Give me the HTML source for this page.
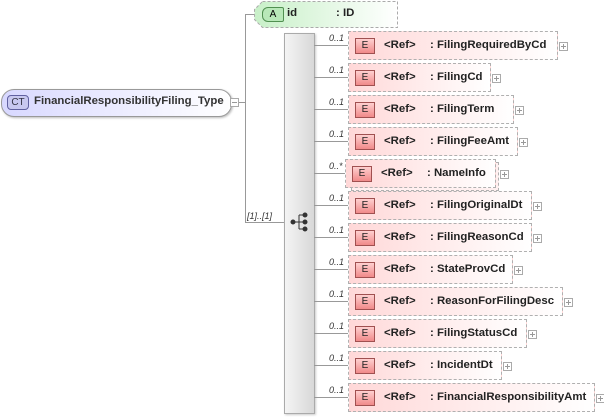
<!DOCTYPE html>
<html><head><style>
body{margin:0;width:604px;height:417px;background:#fff;position:relative;font-family:"Liberation Sans",sans-serif;overflow:hidden}
.a{position:absolute}
.box{position:absolute;height:27px;border:1px dashed #b0b0b0;background:linear-gradient(to right,#ffd8d8,#fff 100%);font-size:11.4px;font-weight:bold;color:#222}
.e{position:absolute;left:6px;top:6px;width:18px;height:14px;border:1px solid #a05050;background:linear-gradient(#ffd0d0,#f08a8a);font-size:10px;font-weight:normal;text-align:center;line-height:14px;color:#222}
.ref{position:absolute;left:35px;top:7px}
.nm{position:absolute;left:81px;top:7px;white-space:nowrap}
.pl{position:absolute;width:7px;height:7px;border:1px solid #aaa;background:#fff}
.pl:before{content:"";position:absolute;left:1px;top:3px;width:5px;height:1px;background:#999}
.pl:after{content:"";position:absolute;left:3px;top:1px;width:1px;height:5px;background:#999}
.mi:after{display:none}
.ln{position:absolute;background:#999}
.m{position:absolute;font-size:9px;font-style:italic;color:#333}
</style></head><body>
<div class="a" style="left:1px;top:89px;width:229px;height:26px;border:1px solid #999;border-radius:13px;background:linear-gradient(to right,#d8d8ff,#fff);box-shadow:1px 1px 2px #bbb"></div>
<div class="a" style="left:7px;top:95px;width:20px;height:13px;border:1px solid #6060a0;border-radius:4px;background:#c8c8f0;font-size:10px;text-align:center;line-height:13px;color:#334">CT</div>
<div class="a" style="left:34px;top:95px;font-size:11.4px;font-weight:bold;color:#333">FinancialResponsibilityFiling_Type</div>
<div class="pl mi" style="left:230px;top:98px;"></div>
<div class="ln" style="left:239px;top:102px;width:6px;height:1px"></div>
<div class="ln" style="left:245px;top:14px;width:1px;height:208px"></div>
<div class="ln" style="left:245px;top:14px;width:12px;height:1px"></div>
<div class="ln" style="left:245px;top:222px;width:39px;height:1px"></div>
<div class="m" style="left:247px;top:211px">[1]..[1]</div>
<svg class="a" style="left:254px;top:1px" width="146" height="28"><defs><linearGradient id="g"><stop offset="0" stop-color="#c8f0c8"/><stop offset="1" stop-color="#fff"/></linearGradient></defs><path d="M8.5 0.5H143.5V26.5H8.5L0.5 18.5V8.5Z" fill="url(#g)" stroke="#aaa" stroke-dasharray="3,2"/></svg>
<div class="a" style="left:262px;top:7px;width:20px;height:13px;border:1px solid #509050;border-radius:6px 2px 2px 6px;background:#b8e8b8;font-size:10px;text-align:center;line-height:13px">A</div>
<div class="a" style="left:287px;top:7px;font-size:11.4px;font-weight:bold;color:#222">id</div>
<div class="a" style="left:336px;top:7px;font-size:11.4px;font-weight:bold;color:#222">: ID</div>
<div class="a" style="left:284px;top:33px;width:29px;height:379px;border:1px solid #aaa;background:linear-gradient(to right,#f4f4f4,#d8d8d8);box-shadow:1px 1px 2px #ccc"></div>
<svg class="a" style="left:290px;top:212px" width="20" height="22"><g fill="#333" stroke="#333"><circle cx="3" cy="10" r="2"/><line x1="3" y1="10" x2="9" y2="10"/><line x1="9" y1="3" x2="9" y2="17"/><line x1="9" y1="3" x2="15" y2="3"/><line x1="9" y1="10" x2="15" y2="10"/><line x1="9" y1="17" x2="15" y2="17"/><circle cx="15" cy="3" r="2"/><circle cx="15" cy="10" r="2"/><circle cx="15" cy="17" r="2"/></g></svg>
<div id="els"></div>
<script>
var d=[["FilingRequiredByCd",556],["FilingCd",489],["FilingTerm",512],["FilingFeeAmt",516],["NameInfo",497],["FilingOriginalDt",530],["FilingReasonCd",530],["StateProvCd",511],["ReasonForFilingDesc",561],["FilingStatusCd",525],["IncidentDt",500],["FinancialResponsibilityAmt",593]];
var h="";
d.forEach(function(x,i){var c=45+32*i;var l=348;var mult=(i==4);
h+='<div class="ln" style="left:314px;top:'+c+'px;width:'+(l-314)+'px;height:1px"></div>';
h+='<div class="m" style="left:329px;top:'+(c-12)+'px">'+(mult?'0..*':'0..1')+'</div>';
if(mult)h+='<div class="box" style="left:'+(l+3)+'px;top:'+(c-11)+'px;width:'+(x[1]-l-3)+'px;background:#fff0f0"></div>';
h+='<div class="box" style="left:'+(mult?l-3:l)+'px;top:'+(c-14)+'px;width:'+(x[1]-l)+'px"><div class="e">E</div><div class="ref">&lt;Ref&gt;</div><div class="nm">: '+x[0]+'</div></div>';
h+='<div class="pl" style="left:'+(x[1]+3)+'px;top:'+(c-3)+'px"></div>';});
document.getElementById("els").innerHTML=h;
</script>
</body></html>
